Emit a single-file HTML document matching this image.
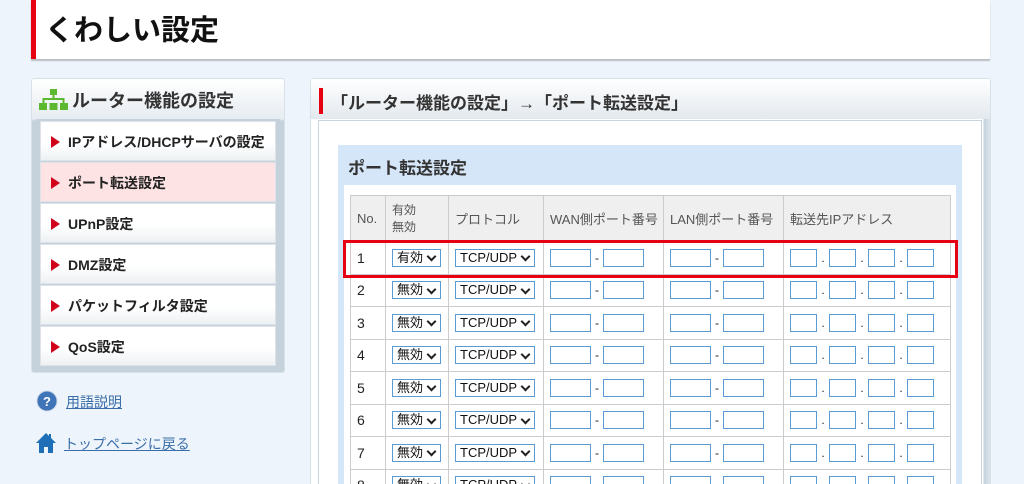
<!DOCTYPE html>
<html><head><meta charset="utf-8">
<style>
*{margin:0;padding:0;box-sizing:border-box}
html,body{width:1024px;height:484px;overflow:hidden}
body{background:#eef4fb;font-family:"Liberation Sans","Noto Sans CJK JP",sans-serif;position:relative;color:#222}
#wrap{position:absolute;left:0;top:0;width:1024px;height:484px;overflow:hidden}
.a{position:absolute}
.hdr{left:31px;top:0;width:959px;height:59px;background:#fff;border-left:5px solid #e60012;box-shadow:0 2px 1px #b8bec4}
.hdr span{position:absolute;left:9px;top:7px;font-size:29px;font-weight:bold;color:#111}
.lp{left:31px;top:78px;width:254px;height:295px;border:1px solid #d8e0e8;border-radius:3px;background:linear-gradient(#fff,#e6ecf1 40px,#c5d2dc 42px);}
.lp .t{position:absolute;left:40px;top:8px;font-size:18px;font-weight:bold;color:#333}
.frame{position:absolute;left:4px;top:40px;width:244px;height:250px;background:#c5d2dc}
.it{position:absolute;left:4px;width:236px;height:40px;background:linear-gradient(#fff 55%,#eef1f3);border:1px solid #dde3e8;font-size:14px;font-weight:bold;color:#222;padding:10px 0 0 10px}
.it:before{content:"";display:inline-block;border-left:9px solid #d0021b;border-top:6px solid transparent;border-bottom:6px solid transparent;margin-right:8px;vertical-align:-1px}
.lk{font-size:14px;color:#3a6ea8;text-decoration:underline}
.rp{left:310px;top:78px;width:681px;height:420px;border:1px solid #d8e0e8;border-radius:3px;background:linear-gradient(to right,#fff 0,#fff 672px,#c5d2dc 673px,#dce4ea)}
.rt{left:311px;top:79px;width:679px;height:40px;background:linear-gradient(#fff,#e3e9ee)}
.rt span{position:absolute;left:20px;top:10px;font-size:17px;font-weight:bold;color:#333}
.rin{left:318px;top:120px;width:664px;height:370px;background:#fff;border:1px solid #c8d4de}
.sec{left:338px;top:145px;width:624px;height:345px;background:#d5e6f8}
.sec span{position:absolute;left:10px;top:9px;font-size:17px;font-weight:bold;color:#333}
.tb{left:344px;top:185px;width:612px;height:305px;background:#fff}
table{position:absolute;left:350px;top:195px;border-collapse:collapse;font-size:14px}
td,th{border:1px solid #ccc;font-weight:normal;text-align:left;vertical-align:middle;padding:0 0 0 6px;white-space:nowrap}
th{background:#efefef;height:46px;font-size:12px;color:#555}
td{height:32.5px;color:#222}
.sel{display:inline-block;border:1px solid #5b9bd5;height:18px;font-size:13px;line-height:16px;padding:0 4px;color:#111;vertical-align:middle}
.sel:after{content:"";display:inline-block;width:5px;height:5px;border-right:2px solid #222;border-bottom:2px solid #222;transform:rotate(45deg);margin:0 1px 3px 5px;vertical-align:middle}
.in{display:inline-block;border:1px solid #5b9bd5;height:18px;vertical-align:middle}
.w{width:41px}.ip{width:27px}
.d{display:inline-block;width:12px;text-align:center;font-size:12px;vertical-align:middle}
.hl{left:343px;top:240px;width:615px;height:38px;border:3px solid #e60012}
</style></head><body><div id="wrap">
<div class="a hdr"><span>くわしい設定</span></div>

<div class="a lp">
<svg class="a" style="left:7px;top:10px" width="29" height="22" viewBox="0 0 29 22"><g fill="#5cb82e"><rect x="11" y="0" width="7" height="6"/><rect x="13.5" y="6" width="2" height="4"/><rect x="3.5" y="9" width="22" height="2"/><rect x="3.5" y="9" width="2" height="5"/><rect x="23.5" y="9" width="2" height="5"/><rect x="0" y="14" width="8" height="7"/><rect x="10.5" y="14" width="8" height="7"/><rect x="21" y="14" width="8" height="7"/></g></svg>
<span class="t">ルーター機能の設定</span>
<div class="frame">
<div class="it" style="top:2px">IPアドレス/DHCPサーバの設定</div>
<div class="it" style="top:43px;background:#fde3e3">ポート転送設定</div>
<div class="it" style="top:84px">UPnP設定</div>
<div class="it" style="top:125px">DMZ設定</div>
<div class="it" style="top:166px">パケットフィルタ設定</div>
<div class="it" style="top:207px">QoS設定</div>
</div>
</div>

<svg class="a" style="left:36px;top:390px" width="22" height="22" viewBox="0 0 22 22"><circle cx="11" cy="11" r="10" fill="#3f74b8" stroke="#c9d6e6" stroke-width="1"/><text x="11" y="16" font-size="13" font-weight="bold" fill="#fff" text-anchor="middle" font-family="Liberation Sans">?</text></svg>
<span class="a lk" style="left:66px;top:392px">用語説明</span>
<svg class="a" style="left:36px;top:432px" width="20" height="22" viewBox="0 0 20 22"><path d="M10 1 L0 11 L3 11 L3 21 L8 21 L8 15 L12 15 L12 21 L17 21 L17 11 L20 11 L15 6 L15 2 L13 2 L13 4 Z" fill="#1e6fb8"/></svg>
<span class="a lk" style="left:64px;top:434px">トップページに戻る</span>

<div class="a rp"></div>
<div class="a rt"><div class="a" style="left:8px;top:9px;width:4px;height:26px;background:#e60012"></div><span>「ルーター機能の設定」→「ポート転送設定」</span></div>
<div class="a rin"></div>
<div class="a sec"><span>ポート転送設定</span></div>
<div class="a tb"></div>
<table>
<tr><th style="width:35px;font-size:13px">No.</th><th style="width:63px;line-height:17px">有効<br>無効</th><th style="width:95px;font-size:13px">プロトコル</th><th style="width:120px;font-size:13px">WAN側ポート番号</th><th style="width:120px;font-size:13px">LAN側ポート番号</th><th style="width:167px;font-size:13px">転送先IPアドレス</th></tr>
<tr><td>1</td><td><span class="sel">有効</span></td><td><span class="sel">TCP/UDP</span></td><td><span class="in w"></span><span class="d">-</span><span class="in w"></span></td><td><span class="in w"></span><span class="d">-</span><span class="in w"></span></td><td><span class="in ip"></span><span class="d">.</span><span class="in ip"></span><span class="d">.</span><span class="in ip"></span><span class="d">.</span><span class="in ip"></span></td></tr>
<tr><td>2</td><td><span class="sel">無効</span></td><td><span class="sel">TCP/UDP</span></td><td><span class="in w"></span><span class="d">-</span><span class="in w"></span></td><td><span class="in w"></span><span class="d">-</span><span class="in w"></span></td><td><span class="in ip"></span><span class="d">.</span><span class="in ip"></span><span class="d">.</span><span class="in ip"></span><span class="d">.</span><span class="in ip"></span></td></tr>
<tr><td>3</td><td><span class="sel">無効</span></td><td><span class="sel">TCP/UDP</span></td><td><span class="in w"></span><span class="d">-</span><span class="in w"></span></td><td><span class="in w"></span><span class="d">-</span><span class="in w"></span></td><td><span class="in ip"></span><span class="d">.</span><span class="in ip"></span><span class="d">.</span><span class="in ip"></span><span class="d">.</span><span class="in ip"></span></td></tr>
<tr><td>4</td><td><span class="sel">無効</span></td><td><span class="sel">TCP/UDP</span></td><td><span class="in w"></span><span class="d">-</span><span class="in w"></span></td><td><span class="in w"></span><span class="d">-</span><span class="in w"></span></td><td><span class="in ip"></span><span class="d">.</span><span class="in ip"></span><span class="d">.</span><span class="in ip"></span><span class="d">.</span><span class="in ip"></span></td></tr>
<tr><td>5</td><td><span class="sel">無効</span></td><td><span class="sel">TCP/UDP</span></td><td><span class="in w"></span><span class="d">-</span><span class="in w"></span></td><td><span class="in w"></span><span class="d">-</span><span class="in w"></span></td><td><span class="in ip"></span><span class="d">.</span><span class="in ip"></span><span class="d">.</span><span class="in ip"></span><span class="d">.</span><span class="in ip"></span></td></tr>
<tr><td>6</td><td><span class="sel">無効</span></td><td><span class="sel">TCP/UDP</span></td><td><span class="in w"></span><span class="d">-</span><span class="in w"></span></td><td><span class="in w"></span><span class="d">-</span><span class="in w"></span></td><td><span class="in ip"></span><span class="d">.</span><span class="in ip"></span><span class="d">.</span><span class="in ip"></span><span class="d">.</span><span class="in ip"></span></td></tr>
<tr><td>7</td><td><span class="sel">無効</span></td><td><span class="sel">TCP/UDP</span></td><td><span class="in w"></span><span class="d">-</span><span class="in w"></span></td><td><span class="in w"></span><span class="d">-</span><span class="in w"></span></td><td><span class="in ip"></span><span class="d">.</span><span class="in ip"></span><span class="d">.</span><span class="in ip"></span><span class="d">.</span><span class="in ip"></span></td></tr>
<tr><td>8</td><td><span class="sel">無効</span></td><td><span class="sel">TCP/UDP</span></td><td><span class="in w"></span><span class="d">-</span><span class="in w"></span></td><td><span class="in w"></span><span class="d">-</span><span class="in w"></span></td><td><span class="in ip"></span><span class="d">.</span><span class="in ip"></span><span class="d">.</span><span class="in ip"></span><span class="d">.</span><span class="in ip"></span></td></tr>
</table>
<div class="a hl"></div>
</div></body></html>
